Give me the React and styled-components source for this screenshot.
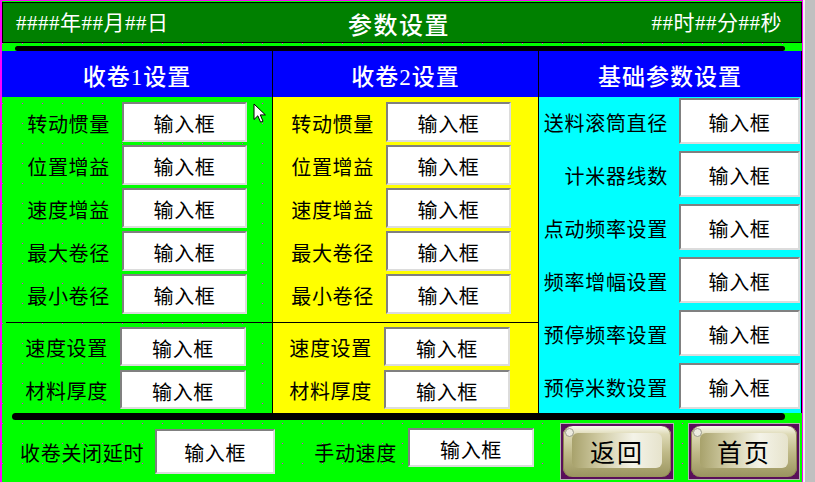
import React from 'react';
import styled, { createGlobalStyle } from 'styled-components';

const CJK = `"Noto Sans CJK SC", "Liberation Sans", sans-serif`;
const SERIF = `"Liberation Serif", "Noto Sans CJK SC", serif`;

const Global = createGlobalStyle`
  html, body { margin: 0; padding: 0; background: #c0c0c0; }
  body { width: 815px; height: 482px; overflow: hidden; }
  * { box-sizing: border-box; }
`;

const Page = styled.div`
  position: relative;
  width: 815px;
  height: 482px;
  background: #c0c0c0;
  display: flex;
`;

const Screen = styled.div`
  position: relative;
  width: 803px;
  height: 482px;
  border-left: 2px solid #ff00ff;
  border-top: 1px solid #ff00ff;
  border-right: 1px solid #ff00ff;
  box-shadow: 2px 0 0 #f2f2f2;
  background-color: #00ff00;
  background-image: conic-gradient(from 90deg at 1px 1px, transparent 50%, #ff00ff 50% 75%, transparent 75%);
  background-size: 20px 20px;
  background-position: 0 2px;
  display: flex;
  flex-direction: column;
`;

const Header = styled.header`
  margin-top: 1px;
  height: 41px;
  border: 1px solid #000;
  background: #008000;
  color: #fff;
  display: grid;
  grid-template-columns: 1fr auto 1fr;
  align-items: center;
  padding: 2px 19px 0 13px;
`;

const Clock = styled.span`
  font-family: ${SERIF};
  font-size: 21px;
  line-height: 1;
  justify-self: ${p => p.$end ? 'end' : 'start'};
  letter-spacing: 0.5px;
`;

const ScreenTitle = styled.h1`
  margin: 0;
  font-family: ${CJK};
  font-weight: 500;
  font-size: 24px;
  line-height: 1;
  letter-spacing: 1.5px;
`;

const Rule = styled.div`
  flex: none;
  height: ${p => p.$h}px;
  margin: ${p => p.$mt}px 17px 0 ${p => p.$ml}px;
  background: #000;
  border-radius: ${p => p.$h / 2}px;
`;

const Panels = styled.div`
  display: grid;
  grid-template-columns: 271px 266px 263px;
  height: 362px;
`;

const Column = styled.section`
  display: flex;
  flex-direction: column;
  border-right: 1px solid #000;
`;

const ColumnTitle = styled.h2`
  margin: 0;
  height: 46px;
  flex: none;
  padding-top: 2px;
  background: #0000ff;
  color: #fff;
  display: flex;
  align-items: center;
  justify-content: center;
  font-family: ${SERIF};
  font-weight: 500;
  font-size: 23px;
  letter-spacing: 1px;
`;

const ColumnBody = styled.div`
  flex: 1;
  background: ${p => p.$bg || 'transparent'};
  padding-top: ${p => p.$pt}px;
  display: flex;
  flex-direction: column;
`;

const Group = styled.div`
  display: flex;
  flex-direction: column;
  gap: ${p => p.$gap}px;
  margin-top: ${p => p.$mt || 0}px;
`;

const Divider = styled.div`
  height: 1px;
  background: #000;
  margin: 8px 0 0 ${p => p.$inset}px;
`;

const Row = styled.div`
  display: flex;
  align-items: center;
  justify-content: flex-end;
  gap: ${p => p.$gap || 12}px;
  height: ${p => p.$h}px;
  padding-right: ${p => p.$pr}px;
`;

const Label = styled.span`
  font-family: ${CJK};
  font-size: 20px;
  line-height: 1;
  padding-top: 3px;
  color: #000;
  letter-spacing: 0.7px;
  white-space: nowrap;
`;

const Field = styled.div`
  width: ${p => p.$w}px;
  height: ${p => p.$h ? `${p.$h}px` : '100%'};
  flex: none;
  padding-top: 3px;
  background: #fff;
  border-top: 2px solid #808080;
  border-left: 2px solid #808080;
  border-right: 2px solid #dcdcdc;
  border-bottom: 2px solid #dcdcdc;
  display: flex;
  align-items: center;
  justify-content: center;
  font-family: ${CJK};
  font-size: 20px;
  color: #000;
  letter-spacing: 0.7px;
  margin-bottom: ${p => p.$lift || 0}px;
`;

const BottomBar = styled.div`
  height: 62px;
  display: flex;
  align-items: center;
  padding-left: 18px;
`;

const Pair = styled.div`
  display: flex;
  align-items: center;
  gap: 11px;
  margin-left: ${p => p.$ml || 0}px;
`;

const Button = styled.button`
  position: relative;
  width: ${p => p.$w}px;
  height: 57px;
  margin-left: ${p => p.$ml}px;
  padding: 2px;
  border: 1px solid #b4b4b4;
  background: #5a0e5a;
  cursor: pointer;
  display: flex;
`;

const Face = styled.span`
  flex: 1;
  display: flex;
  border-radius: 9px;
  padding: 7px 9px 9px;
  background: linear-gradient(180deg, #fbfaf2 0%, #dedab6 16%, #bdb785 55%, #9a945f 100%);
  box-shadow: inset 1px 0 0 #8c874f, inset -1px 0 0 #8c874f;
`;

const FaceInner = styled.span`
  flex: 1;
  border-radius: 6px;
  display: flex;
  align-items: center;
  justify-content: center;
  padding-top: 2px;
  background: linear-gradient(90deg, #a8a26c 0%, #cfcaa2 30%, #f4f3e8 68%, #e6e3cc 100%);
  font-family: ${CJK};
  font-size: 25px;
  color: #000;
  letter-spacing: 2px;
`;

const Led = styled.span`
  position: absolute;
  top: 4px;
  left: 4px;
  width: 9px;
  height: 9px;
  border-radius: 50%;
  border: 1.5px solid #9c9c8c;
  background: #ecebdf;
`;

const Cursor = styled.svg`
  position: absolute;
  left: 253px;
  top: 103px;
  width: 14px;
  height: 21px;
`;

const groupA = ['转动惯量', '位置增益', '速度增益', '最大卷径', '最小卷径'];
const groupB = ['速度设置', '材料厚度'];
const basics = ['送料滚筒直径', '计米器线数', '点动频率设置', '频率增幅设置', '预停频率设置', '预停米数设置'];

function WindColumn({ title, bg, pr, inset }) {
  return (
    <Column>
      <ColumnTitle>{title}</ColumnTitle>
      <ColumnBody $bg={bg} $pt={5}>
        <Group $gap={3}>
          {groupA.map(l => (
            <Row key={l} $h={40} $pr={pr}>
              <Label>{l}</Label>
              <Field $w={125}>输入框</Field>
            </Row>
          ))}
        </Group>
        <Divider $inset={inset} />
        <Group $gap={4} $mt={4}>
          {groupB.map(l => (
            <Row key={l} $h={39} $pr={pr + 1}>
              <Label>{l}</Label>
              <Field $w={126}>输入框</Field>
            </Row>
          ))}
        </Group>
      </ColumnBody>
    </Column>
  );
}

export default function App() {
  return (
    <Page>
      <Global />
      <Screen>
        <Header>
          <Clock>####年##月##日</Clock>
          <ScreenTitle>参数设置</ScreenTitle>
          <Clock $end>##时##分##秒</Clock>
        </Header>
        <Rule $h={5} $mt={3} $ml={13} />
        <Panels>
          <WindColumn title="收卷1设置" pr={25} inset={4} />
          <WindColumn title="收卷2设置" bg="#ffff00" pr={27} inset={0} />
          <Column>
            <ColumnTitle>基础参数设置</ColumnTitle>
            <ColumnBody $bg="#00ffff" $pt={1}>
              <Group $gap={7}>
                {basics.map(l => (
                  <Row key={l} $h={46} $pr={1} $gap={11}>
                    <Label>{l}</Label>
                    <Field $w={121}>输入框</Field>
                  </Row>
                ))}
              </Group>
            </ColumnBody>
          </Column>
        </Panels>
        <Rule $h={7} $mt={0} $ml={10} />
        <BottomBar>
          <Pair>
            <Label>收卷关闭延时</Label>
            <Field $w={120} $h={45}>输入框</Field>
          </Pair>
          <Pair $ml={39}>
            <Label>手动速度</Label>
            <Field $w={126} $h={39} $lift={7}>输入框</Field>
          </Pair>
          <Button $w={114} $ml={26}>
            <Face><FaceInner>返回</FaceInner></Face>
            <Led />
          </Button>
          <Button $w={112} $ml={14}>
            <Face><FaceInner>首页</FaceInner></Face>
            <Led />
          </Button>
        </BottomBar>
      </Screen>
      <Cursor viewBox="0 0 14 21">
        <path d="M1 1 L1 16.5 L4.8 12.8 L7.6 19.2 L10 18.2 L7.3 11.9 L12.4 11.9 Z" fill="#fff" stroke="#000" strokeWidth="1" strokeLinejoin="miter" />
      </Cursor>
    </Page>
  );
}
